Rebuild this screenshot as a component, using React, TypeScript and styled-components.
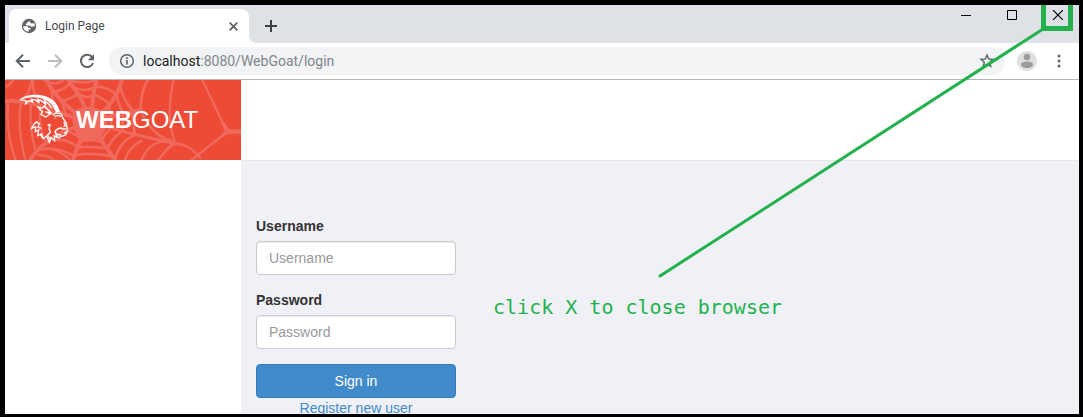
import React from "react";
import styled, { createGlobalStyle } from "styled-components";

const GlobalStyle = createGlobalStyle`
  * { box-sizing: border-box; }
  body { margin: 0; background: #000; }
`;

const uiFont = `Roboto, "Open Sans", sans-serif`;
const pageFont = `"Liberation Sans", Arial, sans-serif`;

const Frame = styled.div`
  position: relative;
  display: flex;
  flex-direction: column;
  height: 100vh;
  overflow: hidden;
  border: solid #000;
  border-width: 5px 4px 3px 5px;
  background: #fff;
`;

const TabStrip = styled.header`
  display: flex;
  align-items: flex-end;
  flex: none;
  height: 38px;
  padding-left: 4px;
  background: #dee1e6;
`;

const Tab = styled.div`
  position: relative;
  display: flex;
  align-items: center;
  width: 240px;
  height: 34px;
  padding: 0 10px 0 12px;
  border-radius: 8px 8px 0 0;
  background: #fff;
  color: #45494d;
  font: 12px/16px ${uiFont};

  &::after {
    content: "";
    position: absolute;
    left: 100%;
    bottom: 0;
    width: 8px;
    height: 8px;
    background: radial-gradient(circle at 100% 0, transparent 8px, #fff 8px);
  }
`;

const TabTitle = styled.span`
  flex: 1;
  padding-left: 8px;
`;

const IconButton = styled.button<{ $width?: number; $height?: number; $color?: string }>`
  display: flex;
  align-items: center;
  justify-content: center;
  flex: none;
  width: ${(p) => p.$width ?? 32}px;
  height: ${(p) => p.$height ?? 32}px;
  padding: 0;
  border: 0;
  background: none;
  color: ${(p) => p.$color ?? "#5f6368"};
`;

const WindowControls = styled.div`
  display: flex;
  align-self: flex-start;
  margin-left: auto;
`;

const Toolbar = styled.nav`
  display: flex;
  align-items: center;
  flex: none;
  height: 37px;
  padding: 0 4px 0 2px;
  border-bottom: 1px solid #b5b5b6;
  background: #fff;
`;

const AddressBar = styled.div`
  display: flex;
  align-items: center;
  flex: 1;
  height: 28px;
  margin: 0 6px 0 6px;
  padding: 0 2px 0 10px;
  border-radius: 14px;
  background: #f1f3f4;
`;

const Address = styled.a`
  flex: 1;
  padding-left: 8px;
  color: #80868b;
  font: 14px/20px ${uiFont};
  text-decoration: none;
`;

const Host = styled.span`
  color: #202124;
`;

const Page = styled.div`
  display: grid;
  grid-template-columns: 236px 1fr;
  grid-template-rows: 80px 1fr;
  flex: 1;
  min-height: 0;
  font: 14px/20px ${pageFont};
`;

const Brand = styled.a`
  position: relative;
  display: flex;
  align-items: center;
  padding-left: 71px;
  overflow: hidden;
  background: #ed4b36;
  color: #fff;
  font: 24px/28px ${pageFont};
  text-decoration: none;
`;

const BrandArt = styled.svg`
  position: absolute;
  inset: 0;
`;

const BrandName = styled.span`
  position: relative;
`;

const TopBar = styled.div`
  background: #fff;
`;

const SidePanel = styled.aside`
  background: #fff;
`;

const Main = styled.main`
  padding: 55px 15px 0;
  border-top: 1px solid #e6e7ec;
  background: #f0f1f7;
  overflow: hidden;
`;

const LoginForm = styled.form`
  display: flex;
  flex-direction: column;
  width: 200px;
`;

const Field = styled.div`
  display: flex;
  flex-direction: column;
  gap: 5px;
  margin-bottom: 15px;
`;

const Label = styled.label`
  color: #333;
  font-weight: bold;
`;

const TextInput = styled.input`
  height: 34px;
  padding: 6px 12px;
  border: 1px solid #ccc;
  border-radius: 4px;
  background: #fff;
  box-shadow: inset 0 1px 1px rgba(0, 0, 0, 0.075);
  color: #555;
  font: 14px/20px ${pageFont};

  &::placeholder {
    color: #999;
    opacity: 1;
  }
`;

const SubmitButton = styled.button`
  height: 34px;
  border: 1px solid #357ebd;
  border-radius: 4px;
  background: #428bca;
  color: #fff;
  font: 14px/20px ${pageFont};
`;

const RegisterLink = styled.a`
  align-self: center;
  color: #428bca;
  text-decoration: none;
`;

const Pointer = styled.svg`
  position: absolute;
  top: 0;
  right: 0;
  pointer-events: none;
`;

const Note = styled.p`
  position: absolute;
  top: 290px;
  right: 297px;
  margin: 0;
  color: #22b14c;
  font: 20px/24px "DejaVu Sans Mono", monospace;
  white-space: nowrap;
`;

const GlobeIcon = () => (
  <svg width="16" height="16" viewBox="0 0 16 16" aria-hidden="true">
    <circle cx="8" cy="8" r="7.2" fill="#5f6368" />
    <path
      d="M8.600 2.200C7.200 2.800 7.700 3.900 6.600 4.300 5.700 4.700 6 5.600 5.100 6c-.8.400-.4 1.400.5 1.400h3.200c1 0 1 1.500 2 1.500.9 0 1.200-.8 2-.6l1 .2c.1-1.700-.3-2.800-.9-3.700-.9.9-1.800 1-2.600.6-.6-.3-.4-1-1.200-1.200-1-.3-1.100-1.300-.5-2z"
      fill="#fff"
    />
    <path d="M2.200 8.200h3.500c1.400 0 1.900.7 1.900 1.700h1.500c.8 0 .8 1.600 0 1.600H7.600v2.200C4.600 13.600 2.200 11.400 2.200 8.200z" fill="#fff" />
  </svg>
);

const BackIcon = () => (
  <svg width="16" height="16" viewBox="0 0 16 16" fill="none" stroke="currentColor" strokeWidth="2" aria-hidden="true">
    <path d="M15 8H2.500M8 1.700 1.700 8 8 14.300" />
  </svg>
);

const ForwardIcon = () => (
  <svg width="16" height="16" viewBox="0 0 16 16" fill="none" stroke="currentColor" strokeWidth="2" aria-hidden="true">
    <path d="M1 8h12.500M8 1.700 14.300 8 8 14.300" />
  </svg>
);

const ReloadIcon = () => (
  <svg width="16" height="16" viewBox="0 0 16 16" aria-hidden="true">
    <path d="M13.100 4.100A6.200 6.200 0 1 0 14 10" fill="none" stroke="currentColor" strokeWidth="2" />
    <path d="M15 1v6.200H8.800z" fill="currentColor" />
  </svg>
);

const InfoIcon = () => (
  <svg width="16" height="16" viewBox="0 0 16 16" fill="none" stroke="#5f6368" aria-hidden="true">
    <circle cx="8" cy="8" r="6.300" strokeWidth="1.500" />
    <path d="M8 7v4.500M8 4.300v1.700" strokeWidth="1.700" />
  </svg>
);

const StarIcon = () => (
  <svg width="16" height="16" viewBox="0 0 16 16" fill="none" stroke="currentColor" strokeWidth="1.400" aria-hidden="true">
    <path d="m8 2 1.700 4 4.300.4-3.300 2.800 1 4.200L8 11.200l-3.700 2.200 1-4.200L2 6.400 6.300 6z" />
  </svg>
);

const AvatarIcon = () => (
  <svg width="20" height="20" viewBox="0 0 20 20" aria-hidden="true">
    <circle cx="10" cy="10" r="10" fill="#dfdfdf" />
    <circle cx="10" cy="6" r="3.200" fill="#9b9b9b" />
    <path d="M4 13.500C4 11.500 7 10.500 10 10.500s6 1 6 3c0 2-3 3.500-6 3.500s-6-1.500-6-3.500z" fill="#9b9b9b" />
  </svg>
);

const MenuIcon = () => (
  <svg width="4" height="14" viewBox="0 0 4 14" fill="currentColor" aria-hidden="true">
    <circle cx="2" cy="2" r="1.500" />
    <circle cx="2" cy="7" r="1.500" />
    <circle cx="2" cy="12" r="1.500" />
  </svg>
);

const WebAndGoat = () => (
  <BrandArt width="236" height="80" viewBox="0 0 708 240" aria-hidden="true">
    <g fill="none" stroke="#f0695c" strokeWidth="8" strokeLinecap="round">
      {/* threads running out from the hub */}
      <g strokeWidth="12">
        <path d="M255 125C190 115 90 55 0 64" />
        <path d="M255 125C200 95 150 55 125 0" />
        <path d="M255 125C245 80 225 45 190 0" />
        <path d="M255 125C265 80 262 40 275 0" />
        <path d="M255 125C300 95 335 60 350 0" />
        <path d="M255 125C200 145 120 170 75 240" />
        <path d="M255 125C235 170 210 210 205 240" />
        <path d="M255 125C285 180 310 210 330 240" />
        <path d="M255 125C330 150 410 170 510 190" strokeWidth="9" />
        <path d="M255 125C310 110 360 100 408 90" />
      </g>
      <path d="M205 95C235 70 285 80 305 105 318 150 280 185 245 185 215 180 195 135 205 95z" fill="#f0695c" stroke="none" />
      {/* rings around the hub */}
      <path d="M228 45q20 12 40 0M268 45q24 8 42 25M310 70q4 20 10 40M320 110q-3 20-2 35M318 145q-18 15-28 35M290 185q-28-8-60-3M230 182q-15-20-42-28" />
      <path d="M208 22q32 16 60 0M270 20q40-2 66 28M336 48q4 28 20 54M356 102q-4 24-4 52M352 154q-30 16-44 52M308 206q-40-8-90-4M218 200q-28-22-68-22M182 108q-5-28-12-45M172 62q20-2 44-18" />
      <path d="M190 0q45 14 85 0M345 18q10 42 40 76M385 94q-5 40 6 70M391 164q-42 14-62 72M325 230q-60-14-118-4M205 228q-40-28-98-20M150 115q-5-40-10-78M140 36q30-2 55-25" />
      <path d="M428 0q-24 44-20 90 22 70 102 100" />
      <g strokeWidth="7">
        <path d="M505 0q-16 80-8 140l13 50q44 4 75 42M510 190q-26 18-50 50M500 190q-60-20-90 50M410 182q-38 18-50 58" />
        <path d="M592 0l60 125 18 27h38M670 152l-60 48-50 40" />
      </g>
      {/* outer strands beneath the left thread */}
      <path d="M10 64q-10 90 22 176M48 64q-12 80 12 172M78 76q-6 60 12 130M105 85q-4 50 15 96M48 60Q75 44 80 0M104 65Q80 38 84 0M0 22Q18 12 24 0M115 0q34 20 60 0M128 205q40 6 68 35M100 225q30 0 46 15" strokeWidth="7" />
    </g>
    <path d="M645 125q20 12 28 22 15 5 35 3v12q-24-2-34 0-20 5-50 32 20-24 34-40-3-15-13-29zM492 170q6 12 18 16 26 2 44 16-26-8-48-6-16 9-34 26 10-20 28-32-10-10-8-20z" fill="#f0695c" />
    {/* horn */}
    <path
      d="M43 61C55 46 80 43 105 45 140 50 158 68 165 96L153 97C145 74 128 58 100 53 82 50 60 53 43 61z"
      fill="#fff"
    />
    <g fill="none" stroke="#fff" strokeWidth="4" strokeLinejoin="miter">
      <path d="M46 61q12-2 18 2l-2 8 10-9 11 4-4-8 12 2 12 9-5-11 11 4 14 12-5-12 13 10 9 12" />
      {/* ear and brow */}
      <path d="M96 81l15 3 11-8M100 84l13 11-5 8 14 8 14-9-15-6 17 2-20-19" />
      <path d="M142 105l11-6 12 1q8 3 8 14l11 15 3 23q-3 8-10 6" />
      <path d="M149 109q12-5 19 1M176 127l6 10-7 3M182 146q-9 3-14-2-15 2-18 12l5 7" />
      {/* muzzle, jaw and beard */}
      <path d="M187 155q-4 13-18 14-3-7-14-5M168 168l-6 5" />
      <path d="M98 125l-11 7-7 13 12-5-1 15 10-5-3 17 11-5 6 14 10-8 8 19 5-15 11 10-1-15 11 6-8-17" />
      <path d="M92 125l11 6-4 11 10 3M136 133l-4 12 4 12-8 8 6 12M128 136l8-4M106 164l8 12" />
    </g>
  </BrandArt>
);

export default function App() {
  return (
    <>
      <GlobalStyle />
      <Frame>
        <TabStrip>
          <Tab>
            <GlobeIcon />
            <TabTitle>Login Page</TabTitle>
            <IconButton $width={12} $height={16} aria-label="Close tab">
              <svg width="9" height="9" viewBox="0 0 9 9" stroke="currentColor" strokeWidth="1.800">
                <path d="M.7.7l7.600 7.600M8.300.7.7 8.300" />
              </svg>
            </IconButton>
          </Tab>
          <IconButton $width={44} $height={34} $color="#3c4043" aria-label="New tab">
            <svg width="12" height="12" viewBox="0 0 12 12" stroke="currentColor" strokeWidth="2">
              <path d="M6 0v12M0 6h12" />
            </svg>
          </IconButton>
          <WindowControls>
            <IconButton $width={46} $height={20} $color="#000" aria-label="Minimize">
              <svg width="10" height="10" viewBox="0 0 10 10" stroke="currentColor">
                <path d="M0 5.500h10" />
              </svg>
            </IconButton>
            <IconButton $width={46} $height={20} $color="#000" aria-label="Maximize">
              <svg width="10" height="10" viewBox="0 0 10 10" fill="none" stroke="currentColor">
                <path d="M.5.5h9v9h-9z" />
              </svg>
            </IconButton>
            <IconButton $width={44} $height={20} $color="#000" aria-label="Close window">
              <svg width="12" height="10" viewBox="0 0 12 10" stroke="currentColor" strokeWidth="1.100">
                <path d="M2 0l10 10M12 0 2 10" />
              </svg>
            </IconButton>
          </WindowControls>
        </TabStrip>
        <Toolbar>
          <IconButton aria-label="Back">
            <BackIcon />
          </IconButton>
          <IconButton $color="#babcbe" aria-label="Forward">
            <ForwardIcon />
          </IconButton>
          <IconButton aria-label="Reload">
            <ReloadIcon />
          </IconButton>
          <AddressBar>
            <InfoIcon />
            <Address href="#login">
              <Host>localhost</Host>:8080/WebGoat/login
            </Address>
            <IconButton aria-label="Bookmark this page">
              <StarIcon />
            </IconButton>
          </AddressBar>
          <IconButton aria-label="Profile">
            <AvatarIcon />
          </IconButton>
          <IconButton aria-label="Menu">
            <MenuIcon />
          </IconButton>
        </Toolbar>
        <Page>
          <Brand href="#home">
            <WebAndGoat />
            <BrandName>
              <b>WEB</b>GOAT
            </BrandName>
          </Brand>
          <TopBar />
          <SidePanel />
          <Main>
            <LoginForm>
              <Field>
                <Label htmlFor="username">Username</Label>
                <TextInput id="username" type="text" placeholder="Username" />
              </Field>
              <Field>
                <Label htmlFor="password">Password</Label>
                <TextInput id="password" type="password" placeholder="Password" />
              </Field>
              <SubmitButton type="submit">Sign in</SubmitButton>
              <RegisterLink href="#registration">Register new user</RegisterLink>
            </LoginForm>
          </Main>
        </Page>
        <Pointer width="440" height="280" viewBox="0 0 440 280" fill="none" stroke="#22b14c" aria-hidden="true">
          <path d="M404.500 0v23.500h27V0" strokeWidth="5" />
          <path d="M404 24 21 271" strokeWidth="3" strokeLinecap="round" />
        </Pointer>
        <Note>click X to close browser</Note>
      </Frame>
    </>
  );
}
